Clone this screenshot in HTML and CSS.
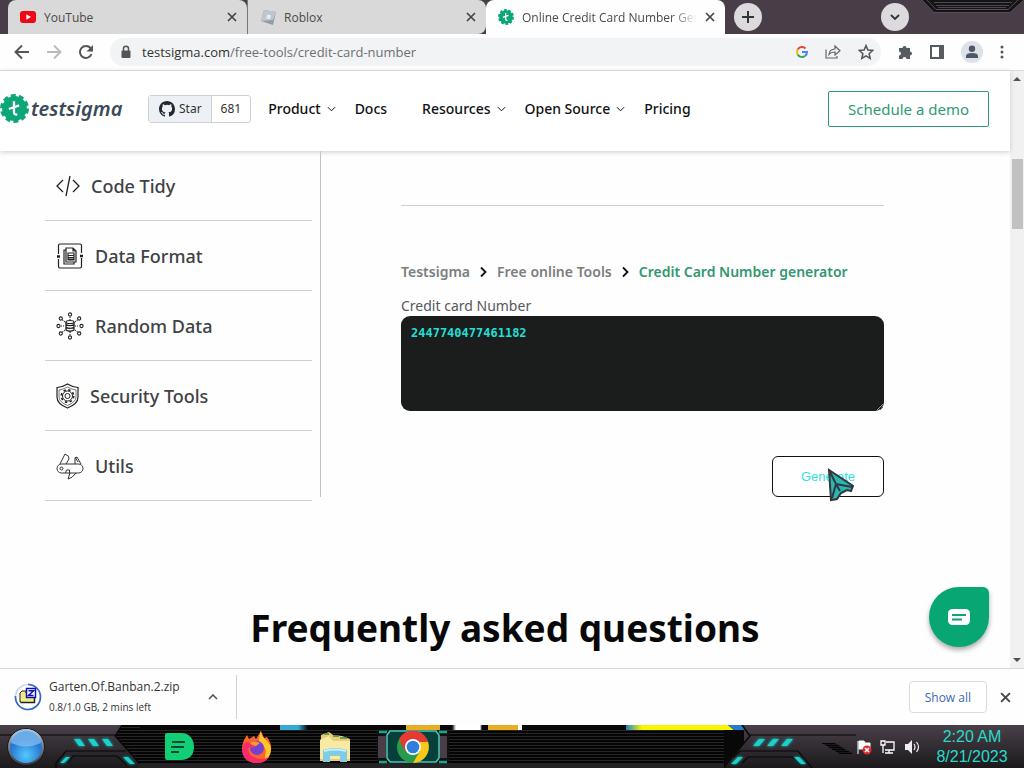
FILE: index.html
```html
<!DOCTYPE html>
<html lang="en">
<head>
<meta charset="utf-8">
<meta name="viewport" content="width=device-width, initial-scale=1">
<title>Online Credit Card Number Generator</title>
<link rel="stylesheet" href="styles.css">
</head>
<body>
<svg class="defs" width="0" height="0" aria-hidden="true">
  <defs>
    <symbol id="gear" viewBox="0 0 28 28">
      <circle cx="14" cy="14" r="12" fill="#0ca678"/>
      <circle cx="14" cy="14" r="12" fill="none" stroke="#0ca678" stroke-width="4" stroke-dasharray="4.600 2.940"/>
      <path d="M13.500 7v10.500q0 2.800 3.200 2.200M8.500 14.500l10-3.500" fill="none" stroke="#fff" stroke-width="2.200"/>
    </symbol>
    <symbol id="cross" viewBox="0 0 10 10"><path d="M1 1l8 8M9 1L1 9" fill="none" stroke="currentColor" stroke-width="1.700"/></symbol>
    <symbol id="down" viewBox="0 0 10 6"><path d="M1 1l4 4 4-4" fill="none" stroke="currentColor" stroke-width="1.100"/></symbol>
    <symbol id="right" viewBox="0 0 7 12"><path d="M1 1.500L5.500 6 1 10.500" fill="none" stroke="#111" stroke-width="1.800"/></symbol>
  </defs>
</svg>

<div class="tabstrip">
  <div class="tab">
    <svg width="16" height="12" viewBox="0 0 16 12"><rect width="16" height="12" rx="3" fill="#f00814"/><path d="M6.300 3.300v5.400L11 6z" fill="#fff"/></svg>
    <span class="tab-title">YouTube</span>
    <button class="icon-btn" aria-label="Close YouTube"><svg width="10" height="10"><use href="#cross"/></svg></button>
  </div>
  <div class="tab tab-second">
    <svg width="16" height="16" viewBox="0 0 16 16"><path d="M4 1l12 2-3 13L1 12z" fill="#929ca6"/><path d="M4 1l12 2-3 8-12 1z" fill="#bdc6cf"/><path d="M7 5.500l4 .8-.8 4-4-.8z" fill="#e6ebef"/></svg>
    <span class="tab-title">Roblox</span>
    <button class="icon-btn" aria-label="Close Roblox"><svg width="10" height="10"><use href="#cross"/></svg></button>
  </div>
  <div class="tab tab-active">
    <svg width="16" height="16"><use href="#gear"/></svg>
    <span class="tab-title">Online Credit Card Number Generator</span>
    <button class="icon-btn" aria-label="Close tab"><svg width="10" height="10"><use href="#cross"/></svg></button>
  </div>
  <div class="strip-rest">
    <button class="round-btn" aria-label="New tab"><svg width="12" height="12" viewBox="0 0 12 12"><path d="M6 0v12M0 6h12" stroke="#333" stroke-width="2"/></svg></button>
    <button class="round-btn" aria-label="Search tabs"><svg width="10" height="6" viewBox="0 0 10 6"><path d="M1 1l4 4 4-4" fill="none" stroke="#333" stroke-width="1.800"/></svg></button>
    <svg class="window-notch" width="104" height="14" viewBox="0 0 104 14"><path d="M2 0l12 12.500h76L104 0z" fill="#161416"/><path d="M2 0l12 12.500h76L104 0M7 0l9 9.500h72L98 0" fill="none" stroke="#555055"/><path d="M14 2.500h78M16 5.500h73M18 7.500h68" stroke="#4c474c"/></svg>
  </div>
</div>

<div class="toolbar">
  <button class="icon-btn" aria-label="Back"><svg width="16" height="16" viewBox="0 0 16 16"><path d="M15 8H2M8 1.500L1.500 8 8 14.500" fill="none" stroke="#555" stroke-width="1.900"/></svg></button>
  <button class="icon-btn" aria-label="Forward"><svg width="16" height="16" viewBox="0 0 16 16"><path d="M1 8h13M8 1.500L14.500 8 8 14.500" fill="none" stroke="#bbb" stroke-width="1.900"/></svg></button>
  <button class="icon-btn" aria-label="Reload"><svg width="16" height="16" viewBox="0 0 16 16"><path d="M13.500 10.200A6 6 0 1 1 12.500 4" fill="none" stroke="#555" stroke-width="2"/><path d="M15 1v6.500H8.500z" fill="#555"/></svg></button>
  <div class="omnibox">
    <svg width="10" height="14" viewBox="0 0 10 14"><path d="M2.500 6V3.800a2.500 2.500 0 0 1 5 0V6" fill="none" stroke="#555" stroke-width="1.500"/><rect x="0.500" y="5.500" width="9" height="7.500" rx="1" fill="#555"/></svg>
    <span class="url">testsigma.com<span class="path">/free-tools/credit-card-number</span></span>
    <div class="omni-actions">
      <svg width="12" height="12" viewBox="0 0 12 12" fill="none" stroke-width="2"><path d="M1.700 3.500A5 5 0 0 1 9.500 2.500" stroke="#e94235"/><path d="M1.700 3.500a5 5 0 0 0 0 5" stroke="#fabb05"/><path d="M1.700 8.500a5 5 0 0 0 7.300 1.500" stroke="#34a853"/><path d="M6 6h5a5 5 0 0 1-2 4" stroke="#4285f4"/></svg>
      <svg width="16" height="16" viewBox="0 0 16 16" fill="none" stroke="#666" stroke-width="1.200"><path d="M1 5.500V14h11v-2"/><path d="M4 10.500q.5-5.300 6-5.500V2l5 4.800-5 4.200V8Q6 8 4 10.500z"/></svg>
      <svg width="16" height="16" viewBox="0 0 16 16"><path d="M8 1.600l1.900 4.500 4.800.4-3.600 3.200 1.100 4.700L8 11.900l-4.200 2.500 1.100-4.700-3.600-3.200 4.800-.4z" fill="none" stroke="#555" stroke-width="1.500"/></svg>
    </div>
  </div>
  <div class="tools">
    <svg width="16" height="16" viewBox="0 0 16 16"><path d="M2 4h3.500a2 2 0 1 1 4 0H13v3.500a2 2 0 1 1 0 4V15H9.500a2 2 0 0 0-4 0H2v-3.500a2 2 0 0 0 0-4z" fill="#555b61"/></svg>
    <svg width="14" height="14" viewBox="0 0 14 14"><rect x="1" y="1" width="12" height="12" fill="none" stroke="#555b61" stroke-width="2"/><path d="M9 1h4v12H9z" fill="#555b61"/></svg>
    <svg width="22" height="22" viewBox="0 0 22 22"><circle cx="11" cy="11" r="11" fill="#dfe1e8"/><circle cx="11" cy="7.800" r="3.200" fill="#4d5769"/><path d="M5 17v-2q0-3 6-3t6 3v2z" fill="#4d5769"/></svg>
    <svg width="4" height="14" viewBox="0 0 4 14" fill="#555"><circle cx="2" cy="2" r="1.500"/><circle cx="2" cy="7" r="1.500"/><circle cx="2" cy="12" r="1.500"/></svg>
  </div>
</div>

<div class="viewport">
  <div class="page">
    <header class="site-header">
      <a class="logo" href="#"><svg width="29" height="29"><use href="#gear"/></svg><span>testsigma</span></a>
      <div class="github">
        <a class="gh-star" href="#"><svg width="16" height="16" viewBox="0 0 16 16"><path fill="#24292f" d="M8 0C3.580 0 0 3.580 0 8c0 3.540 2.290 6.530 5.470 7.590.4.070.55-.17.55-.38 0-.19-.01-.82-.01-1.490-2.010.37-2.530-.49-2.690-.94-.09-.23-.48-.94-.82-1.130-.28-.15-.68-.52-.01-.53.63-.01 1.080.58 1.230.82.72 1.210 1.870.87 2.330.66.070-.52.280-.87.510-1.070-1.780-.2-3.640-.89-3.640-3.950 0-.87.310-1.590.82-2.150-.08-.2-.36-1.020.08-2.120 0 0 .67-.21 2.200.82a7.600 7.600 0 0 1 4 0c1.530-1.040 2.200-.82 2.200-.82.44 1.100.16 1.920.08 2.120.51.560.82 1.270.82 2.150 0 3.070-1.870 3.750-3.650 3.950.29.250.54.730.54 1.480 0 1.070-.01 1.930-.01 2.200 0 .21.150.46.550.38A8 8 0 0 0 16 8c0-4.420-3.580-8-8-8z"/></svg>Star</a>
        <a class="gh-count" href="#">681</a>
      </div>
      <nav class="nav">
        <a href="#">Product<svg width="9" height="6"><use href="#down"/></svg></a>
        <a class="nav-docs" href="#">Docs</a>
        <a href="#">Resources<svg width="9" height="6"><use href="#down"/></svg></a>
        <a href="#">Open Source<svg width="9" height="6"><use href="#down"/></svg></a>
        <a href="#">Pricing</a>
      </nav>
      <a class="demo" href="#">Schedule a demo</a>
    </header>

    <div class="columns">
      <nav class="side" aria-label="Tools">
        <a href="#"><svg width="24" height="22" viewBox="0 0 24 22" fill="none" stroke="#222" stroke-width="1.300"><path d="M7 5L1 11l6 6M17 5l6 6-6 6M14 1l-4 20"/></svg>Code Tidy</a>
        <a href="#"><svg width="28" height="28" viewBox="0 0 28 28" fill="none" stroke="#222" stroke-width="1.200"><rect x="2.500" y="2" width="23" height="24" rx="1.500"/><path d="M2.500 12v5M25.500 11v5" stroke="#fff" stroke-width="2"/><path d="M1 14.500h3M24 14h3" stroke-width="2.500"/><path d="M10 6h7l3 3v11H10zM17 6v3h3M10 8H8v14h10v-2"/><path d="M12 11h6v7h-6zM12 13.500h6M12 15.500h6M12 17h6" stroke-width="1.200"/></svg>Data Format</a>
        <a href="#"><svg width="28" height="28" viewBox="0 0 28 28" fill="none" stroke="#222" stroke-width="1.100"><ellipse cx="14" cy="10" rx="4" ry="1.500"/><path d="M10 10v8q4 2.500 8 0v-8M10 12.600q4 2 8 0M10 15.400q4 2 8 0" stroke-width="1.300"/><circle cx="14" cy="2.500" r="1.600"/><circle cx="14" cy="25.500" r="1.600"/><circle cx="2.500" cy="14" r="1.600"/><circle cx="25.500" cy="14" r="1.600"/><circle cx="4.800" cy="6.500" r="1.600"/><circle cx="23.200" cy="6.500" r="1.600"/><circle cx="4.800" cy="21.500" r="1.600"/><circle cx="23.200" cy="21.500" r="1.600"/><path d="M14 5v3M14 20v3M5 14h4M19 14h4M6.500 8l2.500 2M21.500 8L19 10M6.500 20L9 18M21.500 20L19 18" stroke-dasharray="1 1"/></svg>Random Data</a>
        <a href="#"><svg width="23" height="26" viewBox="0 0 23 26" fill="none" stroke="#222"><path d="M11.500 1Q16 4 22 4.500V14q0 7-10.500 11Q1 21 1 14V4.500Q7 4 11.500 1z" stroke-width="1.200"/><path d="M11.500 4Q16 6.500 20 7v7q0 5-8.500 8.500Q3 19 3 14V7q4-.5 8.500-3z" stroke-width=".6"/><circle cx="11.500" cy="13" r="2.500"/><circle cx="11.500" cy="13" r="5"/><circle cx="11.500" cy="13" r="6.200" stroke-width="1.600" stroke-dasharray="2.400 2.470"/></svg>Security Tools</a>
        <a href="#"><svg width="28" height="28" viewBox="0 0 28 28" fill="none" stroke="#333"><rect x="1" y="12" width="26" height="9" rx="4.500"/><circle cx="5.500" cy="16.500" r="1.500"/><path d="M4 12l5-10q5 2 4 5l-3 5M19 12V6l2-1 4 7M19 5l3 5M9.500 21l1-3h3v3M14 21l-2 6q4-.5 8-6"/></svg>Utils</a>
      </nav>
      <main class="main">
        <hr class="rule">
        <div class="crumbs">
          <a href="#">Testsigma</a><svg width="7" height="12"><use href="#right"/></svg>
          <a href="#">Free online Tools</a><svg width="7" height="12"><use href="#right"/></svg>
          <a class="crumb-current" href="#">Credit Card Number generator</a>
        </div>
        <label class="field-label" for="number">Credit card Number</label>
        <textarea class="output" id="number" spellcheck="false">2447740477461182</textarea>
        <div class="generate-wrap">
          <button class="generate">Generate</button>
          <svg class="pointer" width="30" height="34" viewBox="0 0 30 34"><path d="M3 2l24 16-2 5-4-1-6 3-4 6-6 1z" fill="#29b8b0" stroke="#333640" stroke-width="2"/><path d="M3 2l7 14-4 14M10 16l16 3M10 16l4 7" fill="none" stroke="#333640" stroke-width="2"/></svg>
        </div>
      </main>
    </div>
    <h2 class="faq">Frequently asked questions</h2>
    <button class="chat" aria-label="Open chat"><svg width="24" height="18" viewBox="0 0 24 18"><rect x="1" y="1" width="22" height="16" rx="4.500" fill="#fff"/><path d="M5 7h14M5 11.500h10" stroke="#07a673" stroke-width="2"/></svg></button>
  </div>
  <div class="scrollbar">
    <svg width="8" height="4" viewBox="0 0 8 4"><path d="M0 4l4-4 4 4z" fill="#505050"/></svg>
    <div class="thumb"></div>
    <svg width="8" height="4" viewBox="0 0 8 4"><path d="M0 0l4 4 4-4z" fill="#505050"/></svg>
  </div>
</div>

<div class="downloads">
  <div class="download">
    <svg width="28" height="28" viewBox="0 0 28 28"><circle cx="14" cy="14" r="12.500" fill="none" stroke="#c9d6ea" stroke-width="1.600"/><path d="M14 1.500A12.500 12.500 0 1 1 1.500 13" fill="none" stroke="#3568c0" stroke-width="1.600"/><path d="M6 10l2-2h4v11H6z" fill="#eeee86" stroke="#222"/><path d="M7 19h13v-5h-8v-4H7z" fill="#eeee86"/><path d="M6.500 19.500h14v-5" fill="none" stroke="#222" stroke-width="1.500"/><rect x="12.500" y="5.500" width="9" height="9" fill="#fff" stroke="#1010b8" stroke-width="1.500"/><path d="M14.500 7.700h5l-5 4.700h5" fill="none" stroke="#1010b8" stroke-width="1.500"/></svg>
    <div class="file"><span class="file-name">Garten.Of.Banban.2.zip</span><span class="file-status">0.8/1.0 GB, 2 mins left</span></div>
    <button class="icon-btn" aria-label="Download options"><svg width="10" height="6" viewBox="0 0 10 6"><path d="M1 5l4-4 4 4" fill="none" stroke="#555" stroke-width="1.600"/></svg></button>
  </div>
  <button class="show-all">Show all</button>
  <button class="icon-btn" aria-label="Close downloads"><svg width="11" height="11"><use href="#cross"/></svg></button>
</div>

<footer class="taskbar">
  <div class="bar-left">
    <svg width="140" height="43" viewBox="0 0 140 43">
      <defs>
        <linearGradient id="metal" x2="0" y2="1"><stop stop-color="#494149"/><stop offset="1" stop-color="#1b191c"/></linearGradient>
        <radialGradient id="orb" cx=".5" cy=".75"><stop stop-color="#54c8ff"/><stop offset="1" stop-color="#2778d2"/></radialGradient>
        <linearGradient id="rim" x2="0" y2="1"><stop stop-color="#c4c8cc"/><stop offset="1" stop-color="#34383e"/></linearGradient>
        <filter id="glow" x="-50%" y="-50%" width="200%" height="200%"><feGaussianBlur stdDeviation="1.500"/></filter>
        <g id="lights"><path d="M74 14h6l5 7h-6zM88 14h6l5 7h-6zM102 14h6l5 7h-6zM60 38l6-6h4l-6 6zM123 32h5l7 7h-5z"/></g>
      </defs>
      <path d="M0 0h122l-7 11 23 26v6H0z" fill="url(#metal)"/>
      <path d="M0 10h115M122 0l-7 11 25 28M56 43v-5l10-12h60M68 38l5-7h44l10 9" fill="none" stroke="#070707" stroke-width="1.200"/>
      <use href="#lights" fill="#00c9bf" filter="url(#glow)"/><use href="#lights" fill="#19d2cb"/>
      <circle cx="26" cy="22" r="18.500" fill="url(#rim)" stroke="#16181b"/><circle cx="26" cy="22" r="16" fill="url(#orb)"/><path d="M11 18a15 14 0 0 1 30 0q-15 7-30 0z" fill="#8fc6f4" opacity=".65"/>
    </svg>
  </div>
  <div class="bar-mid">
    <button class="app" aria-label="Dashlane"><svg width="30" height="28" viewBox="0 0 30 28"><path d="M1 2q0-2 2-2h14c8 0 13 6 13 14s-5 13-13 13H3q-2 0-2-2z" fill="#12ce74"/><path d="M8 9h13M7 14h13M7 19h8" stroke="#064c32" stroke-width="2"/></svg></button>
    <button class="app" aria-label="Firefox"><svg width="32" height="34" viewBox="0 0 32 34"><path d="M3 10l3-5 2 4 5-3 2 3 5-8 3 7 3-1q5 7 4 13Q28 33 16 33T1 20q0-6 2-10z" fill="#ff632e"/><path d="M20 1q0 5 5 9t5 10q-1 8-7 10 5-13-5-18 0-7 2-11z" fill="#ffc72b"/><circle cx="16" cy="18" r="7" fill="#7442cf"/><path d="M1 20Q2 33 16 33q8 0 12-6-9 4-15 0-7-3-5-10l6 1q-3-6-8-6-4 0-5 8z" fill="#f72d68"/><path d="M9 13q5-3 10 0l-4 3q-4 0-6-3z" fill="#ff9638"/></svg></button>
    <button class="app" aria-label="File Explorer"><svg width="34" height="32" viewBox="0 0 34 32"><path d="M3 4l8-3 4 3 9 1 8 3v22H2z" fill="#e8ce70"/><path d="M2 9l9-4 4 5h17v18H2z" fill="#f8e9a5"/><path d="M6 3h5M15 5h6M22 7h7" stroke="#37895a" stroke-width="1.500"/><path d="M5 19q12-4 24 0v12h-7v-6H12v6H5z" fill="#81cce5"/><path d="M6 20q11-3 22 0" fill="none" stroke="#c6f0fa" stroke-width="2"/></svg></button>
    <button class="app" aria-label="Chrome"><svg width="76" height="34" viewBox="0 0 76 34"><path d="M2 2h72v30H2z" fill="#111"/><path d="M3 6h8v22H3zM64 6h8v22h-8z" fill="#493d46"/><path d="M4 2h8M64 2h8M4 32h8M64 32h8" stroke="#16a88c" stroke-width="2.500"/><path d="M15 1h46l3 4v23l-3 4H15l-3-4V5z" fill="#073f3b" stroke="#4ac7b9" stroke-width="1.500"/><circle cx="38" cy="17" r="16" fill="#299b4c"/><path d="M24 9a16 16 0 0 1 28 0l1.500 4H38L30 21z" fill="#e53b30"/><path d="M53 12a16 16 0 0 1-15 21l7-12V12z" fill="#fbc818"/><circle cx="38" cy="17" r="8" fill="#fff"/><circle cx="38" cy="17" r="6.300" fill="#317edc"/></svg></button>
  </div>
  <div class="bar-right">
    <svg width="132" height="43" viewBox="0 0 132 43">
      <path d="M18 0h114v43H1v-4L26 11z" fill="url(#metal)"/>
      <path d="M0 0h4l6 5H0z" fill="#f6f600"/><path d="M4 0h14l3 5H10z" fill="#207fcb"/>
      <path d="M18 0l8 11L0 42" fill="none" stroke="#070707" stroke-width="1.500"/><path d="M26 10h106M10 32l6-6h58l14 17M18 38l6-6h44l9 8" fill="none" stroke="#070707" stroke-width="1.200"/>
      <g fill="#19d2cb"><path id="r-shapes" d="M29 21l6-7h6l-6 7zM43 21l6-7h6l-6 7zM57 21l6-7h6l-6 7zM7 39l7-7h5l-7 7zM70 32h5l7 7h-5z"/><use href="#r-shapes" filter="url(#glow)"/></g>
      <path d="M98 18h13l18 11h-13z" fill="#19171a"/><path d="M98 18.500h13M102 20.500h13M105 22.500h13M108 24.500h13M112 26.500h13M115 28.500h13" stroke="#050505"/>
    </svg>
    <div class="tray">
      <svg width="16" height="16" viewBox="0 0 16 16"><path d="M2 2v13M3 2h5l1 2h5v6H3z" fill="#fff" stroke="#fff"/><circle cx="11" cy="11" r="4.500" fill="#d92c2c"/><path d="M9 9l4 4M13 9l-4 4" stroke="#fff" stroke-width="1.500"/></svg>
      <svg width="16" height="16" viewBox="0 0 16 16" fill="none" stroke="#fff" stroke-width="1.300"><path d="M6 3h8v8H5M9 11v3M5 14h8M3 6v8M1 2h4v4H1z"/></svg>
      <svg width="16" height="16" viewBox="0 0 16 16"><path d="M1 5h3l4-4v14l-4-4H1z" fill="#eee"/><path d="M10 5q2 3 0 6M12.500 3q4 5 0 10" fill="none" stroke="#eee" stroke-width="1.200"/></svg>
    </div>
    <div class="clock"><span>2:20 AM</span><span>8/21/2023</span></div>
  </div>
</footer>
</body>
</html>
```

FILE: styles.css
```css
* { box-sizing: border-box; }
body {
  margin: 0;
  min-height: 100vh;
  display: flex;
  flex-direction: column;
  background: #fefefe;
  color: #333;
  font-family: "Open Sans", "Noto Sans", sans-serif;
}
a { color: inherit; text-decoration: none; }
button { font: inherit; cursor: pointer; }
svg { display: block; flex: none; }
.defs { position: absolute; }
.icon-btn { display: flex; padding: 0; border: 0; background: none; color: #444; }

/* Browser tabs */
.tabstrip { display: flex; height: 34px; padding-left: 8px; background: #483e47; }
.tab {
  display: flex;
  align-items: center;
  flex: 0 1 239px;
  min-width: 0;
  gap: 8px;
  padding: 0 10px 0 12px;
  border-radius: 8px 8px 0 0;
  background: #d9d9d9;
  font-size: 12px;
}
.tab-second { border-left: 1px solid #777; border-radius: 0 8px 8px 0; }
.tab-active { background: #fefefe; }
.tab-title {
  flex: 1;
  overflow: hidden;
  white-space: nowrap;
  color: #4a4a4a;
}
.tab-active .tab-title { mask-image: linear-gradient(to right, #000 85%, transparent); }
.strip-rest { display: flex; flex: 1; align-items: center; padding-left: 9px; }
.round-btn {
  display: flex;
  align-items: center;
  justify-content: center;
  width: 28px;
  height: 28px;
  padding: 0;
  border: 0;
  border-radius: 50%;
  background: #dcdadc;
}
.round-btn + .round-btn { margin-left: auto; }
.window-notch { align-self: flex-start; margin-left: 11px; }

/* Address bar */
.toolbar {
  display: flex;
  align-items: center;
  gap: 16px;
  height: 37px;
  padding: 0 20px 0 14px;
  border-bottom: 1px solid #d9dadb;
}
.omnibox {
  display: flex;
  flex: 1;
  align-items: center;
  gap: 11px;
  height: 28px;
  padding: 0 7px 0 11px;
  border-radius: 14px;
  background: #f2f3f4;
}
.url { color: #333; font-size: 13px; }
.path { color: #6d7073; }
.omni-actions, .tools { display: flex; align-items: center; gap: 17px; }
.omni-actions { margin-left: auto; }

/* Web page */
.viewport { display: flex; flex: 1; }
.page { position: relative; flex: 1; min-width: 0; font-family: "Noto Sans", "Open Sans", sans-serif; }
.site-header {
  position: relative;
  display: flex;
  align-items: center;
  height: 80px;
  padding: 0 21px 5px 0;
  background: #fff;
  box-shadow: 0 1px 5px #ccc;
}
.logo {
  display: flex;
  align-items: center;
  gap: 2px;
  width: 148px;
  color: #3b4a59;
  font-size: 20px;
  font-style: italic;
  font-weight: 600;
}
.github { display: flex; border: 1px solid #ced1d4; border-radius: 3px; font-size: 12px; line-height: 26px; }
.gh-star { display: flex; align-items: center; gap: 4px; padding: 0 9px 0 10px; background: #edf1f5; }
.gh-count { padding: 0 9px; border-left: 1px solid #ced1d4; }
.nav {
  display: flex;
  gap: 19px;
  margin: 0 auto 0 17px;
  color: #111;
  font-size: 14px;
  font-weight: 500;
  white-space: nowrap;
}
.nav a { display: flex; align-items: center; gap: 6px; }
.nav-docs { margin-right: 16px; }
.demo {
  padding: 0 19px;
  border: 1px solid #2c9b75;
  border-radius: 2px;
  color: #2c9b75;
  font-size: 15px;
  line-height: 34px;
  white-space: nowrap;
}
.columns { display: flex; align-items: flex-start; padding: 0 126px 0 45px; }
.side { flex: none; width: 267px; margin-right: 8px; }
.side a {
  display: flex;
  align-items: center;
  gap: 11px;
  height: 70px;
  padding-left: 11px;
  border-bottom: 1px solid #ccd2d4;
  color: #404244;
  font-size: 18px;
  font-weight: 500;
}
.main { flex: 1; min-width: 0; padding: 54px 0 0 80px; border-left: 1px solid #bfc2c4; }
.rule { margin: 0 0 55px; border: 0; border-top: 1px solid #ccd2d4; }
.crumbs {
  display: flex;
  align-items: center;
  gap: 10px;
  margin-bottom: 12px;
  color: #7b7d7e;
  font-size: 14px;
  font-weight: 600;
  line-height: 22px;
  white-space: nowrap;
}
.crumb-current { color: #32976f; }
.field-label { display: block; color: #55585a; font-size: 14px; line-height: 21px; }
.output {
  display: block;
  width: 100%;
  height: 95px;
  padding: 10px;
  border: 0;
  border-radius: 9px;
  background: #1b1c1c;
  color: #22dfd3;
  font-family: "DejaVu Sans Mono", monospace;
  font-size: 12px;
  font-weight: 700;
}
.generate-wrap { position: relative; width: 112px; margin: 45px 0 0 auto; }
.generate {
  width: 100%;
  height: 41px;
  padding: 0;
  border: 1px solid #111;
  border-radius: 6px;
  background: #fff;
  color: #2fe2dc;
  font-family: "Liberation Sans", Arial, sans-serif;
  font-size: 13px;
}
.pointer { position: absolute; top: 12px; left: 54px; }
.faq { margin: 100px 0 13px; color: #080808; font-size: 37px; line-height: 54px; text-align: center; }
.chat {
  position: absolute;
  right: 21px;
  bottom: 21px;
  display: flex;
  align-items: center;
  justify-content: center;
  width: 60px;
  height: 60px;
  padding: 0;
  border: 0;
  border-radius: 30px 6px 30px 30px;
  background: #07a673;
  box-shadow: 0 3px 5px #aaa;
}
.scrollbar {
  display: flex;
  flex-direction: column;
  align-items: center;
  width: 14px;
  padding: 6px 0;
  background: #f1f1f1;
}
.thumb { width: 11px; height: 70px; margin: 78px 0 auto; background: #c1c1c1; }

/* Download shelf */
.downloads {
  display: flex;
  align-items: center;
  height: 57px;
  padding-right: 13px;
  border-top: 1px solid #d6d7d8;
}
.download {
  display: flex;
  align-items: center;
  gap: 7px;
  width: 237px;
  height: 44px;
  margin-right: auto;
  padding: 0 18px 0 14px;
  border-right: 1px solid #d0d1d2;
}
.file { display: flex; flex: 1; flex-direction: column; line-height: 20px; white-space: nowrap; }
.file-name { font-size: 12px; }
.file-status { font-size: 10px; }
.show-all {
  height: 32px;
  margin-right: 13px;
  padding: 0 15px;
  border: 1px solid #dadbdc;
  border-radius: 4px;
  background: #fff;
  color: #3c67b5;
  font-size: 12px;
}

/* Desktop taskbar */
.taskbar { display: flex; height: 43px; background: #29262a; }
.bar-left {
  background: linear-gradient(transparent 38px, #242225 38px), repeating-linear-gradient(#050505 0 2px, #262626 2px 3px);
}
.bar-mid {
  display: flex;
  flex: 1;
  align-items: center;
  min-width: 0;
  background:
    linear-gradient(90deg, #080808 140px, #38a9d5 140px 158px, #080808 168px 266px, #e9ad24 266px 300px, #080808 300px 312px, #fff 316px 340px, #080808 342px 348px, #e9ad24 348px 378px, #fff 378px 382px, #080808 382px 486px, #207fcb 486px, #f6f600 502px) 0 0 / 100% 5px no-repeat,
    linear-gradient(transparent 38px, #242225 38px),
    repeating-linear-gradient(#050505 0 2px, #262626 2px 3px);
}
.app { display: flex; justify-content: center; width: 78px; padding: 0; border: 0; background: none; }
.bar-right { display: flex; width: 300px; background: linear-gradient(90deg, #080808 20px, transparent 20px), linear-gradient(#494149, #1b191c); }
.tray { display: flex; align-items: center; gap: 8px; }
.clock {
  display: flex;
  flex: 1;
  flex-direction: column;
  align-items: center;
  justify-content: center;
  color: #28dbc9;
  font-family: "Liberation Sans", Arial, sans-serif;
  font-size: 16px;
  line-height: 20px;
}
```
